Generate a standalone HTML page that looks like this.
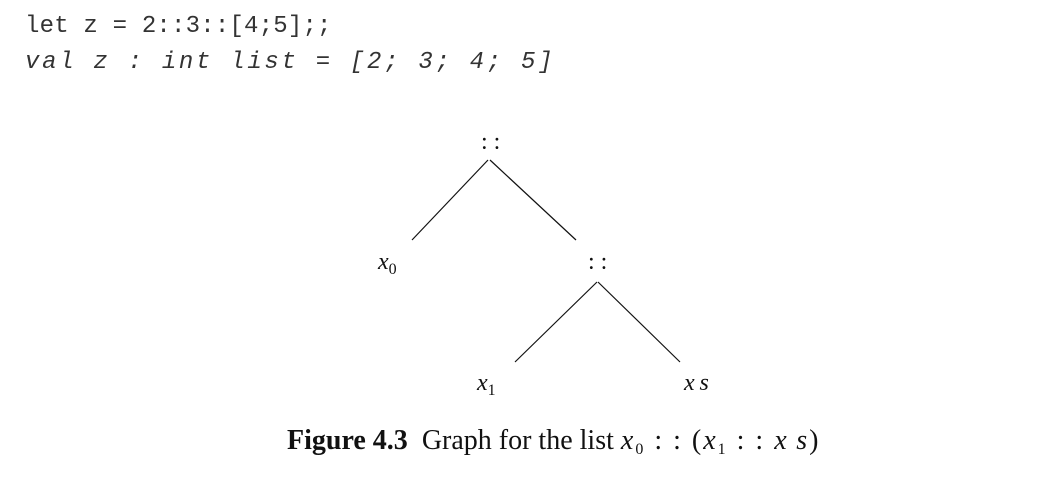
<!DOCTYPE html>
<html><head><style>
body{margin:0;width:1062px;height:481px;background:#fff;position:relative;overflow:hidden}
.c{position:absolute;left:25px;font-family:"Liberation Mono",monospace;font-size:24px;color:#333;white-space:pre;line-height:1}
.t{position:absolute;font-family:"Liberation Serif",serif;font-size:24px;color:#111;white-space:pre;line-height:1}
i{font-style:italic}
sub{font-size:16px;vertical-align:-5px;font-style:normal}
</style></head><body>
<div class="c" style="top:15px;letter-spacing:0.2px">let z = 2::3::[4;5];;</div>
<div class="c" style="top:51px;letter-spacing:2.7px"><i>val z : int list = [2; 3; 4; 5]</i></div>
<svg width="1062" height="481" style="position:absolute;left:0;top:0">
<g stroke="#111" stroke-width="1.2">
<line x1="488" y1="160" x2="412" y2="240"/>
<line x1="490" y1="160" x2="576" y2="240"/>
<line x1="597" y1="282" x2="515" y2="362"/>
<line x1="598" y1="282" x2="680" y2="362"/>
</g></svg>
<div class="t" style="left:481px;top:130px">: :</div>
<div class="t" style="left:378px;top:250px"><i>x</i><sub>0</sub></div>
<div class="t" style="left:588px;top:250px">: :</div>
<div class="t" style="left:477px;top:371px"><i>x</i><sub>1</sub></div>
<div class="t" style="left:684px;top:371px"><i>x&thinsp;s</i></div>
<div class="t" style="left:287px;top:427px;font-size:28px"><b>Figure 4.3</b>&nbsp; Graph for the list <span style="letter-spacing:2px"><i>x</i><sub>0</sub> : : (<i>x</i><sub>1</sub> : : <i>x&thinsp;s</i>)</span></div>
</body></html>
